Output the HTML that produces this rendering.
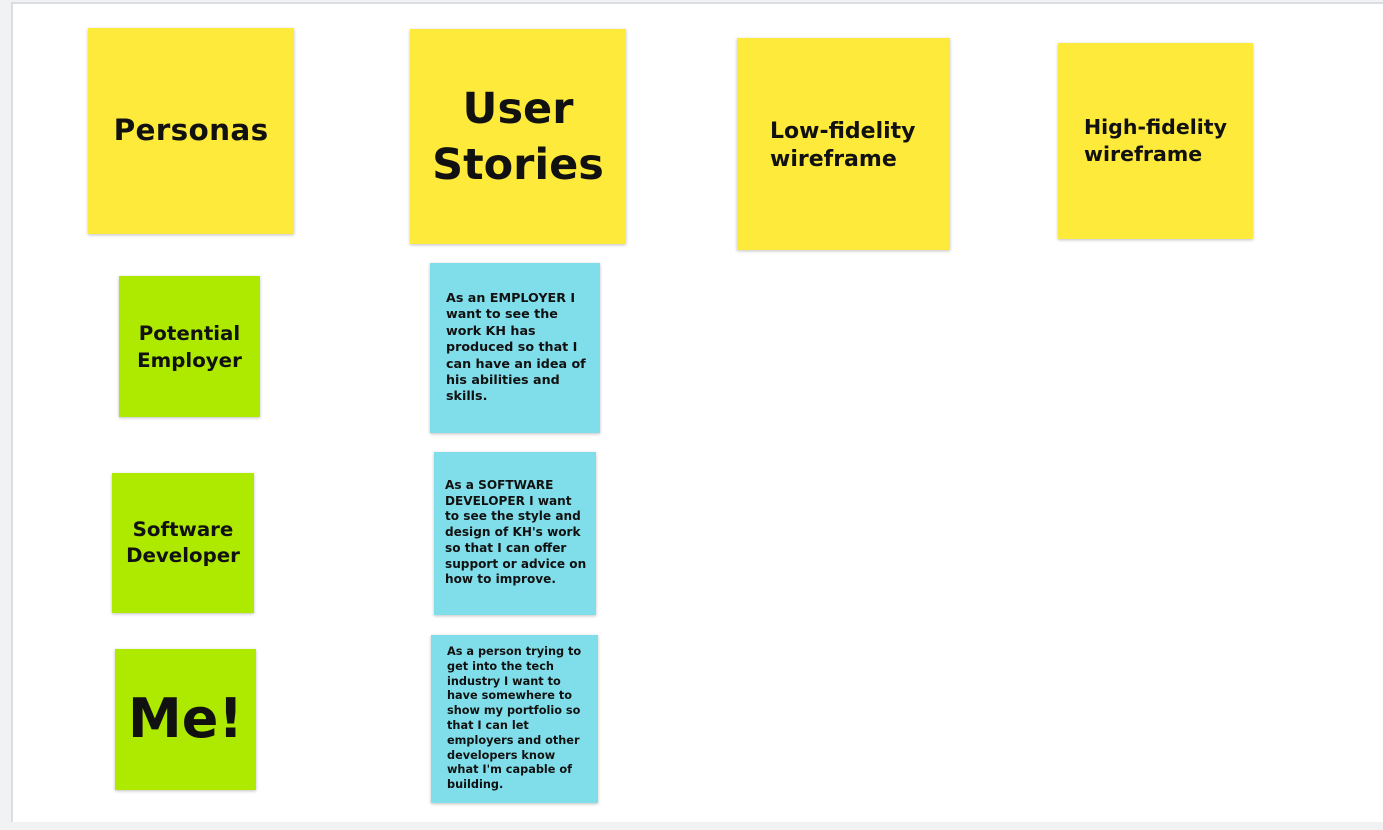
<!DOCTYPE html>
<html><head><meta charset="utf-8"><style>
html,body{margin:0;padding:0;}
body{width:1383px;height:830px;background:#f1f2f4;position:relative;overflow:hidden;font-family:"DejaVu Sans","Liberation Sans",sans-serif;font-weight:bold;color:#111;}
.canvas{position:absolute;left:11px;top:2px;width:1380px;height:818px;background:#fff;border-left:2px solid #dcdde0;border-top:2px solid #dcdde0;}
.n{position:absolute;box-shadow:0 1px 3px rgba(0,0,0,.25);white-space:nowrap;}
.y{background:#feea3b;}
.g{background:#aeea00;}
.c{background:#80deea;}
.t{position:absolute;}
</style></head><body>
<div class="canvas"></div>
<div class="n y" style="left:88px;top:28px;width:206px;height:206px;"><div class="t" style="left:0;right:0;top:85px;text-align:center;font-size:29.5px;letter-spacing:0.3px;">Personas</div></div>
<div class="n y" style="left:410px;top:29px;width:216px;height:215px;"><div class="t" style="left:0;right:0;top:52px;text-align:center;font-size:43px;line-height:56px;">User<br>Stories</div></div>
<div class="n y" style="left:737px;top:38px;width:213px;height:212px;"><div class="t" style="left:33px;top:80px;font-size:22px;line-height:28px;">Low-fidelity<br>wireframe</div></div>
<div class="n y" style="left:1058px;top:43px;width:195px;height:196px;"><div class="t" style="left:26px;top:71px;font-size:20.5px;line-height:27px;">High-fidelity<br>wireframe</div></div>
<div class="n g" style="left:119px;top:276px;width:141px;height:141px;"><div class="t" style="left:0;right:0;top:44px;text-align:center;font-size:19.8px;line-height:27px;">Potential<br>Employer</div></div>
<div class="n g" style="left:112px;top:473px;width:142px;height:140px;"><div class="t" style="left:0;right:0;top:44px;text-align:center;font-size:19.8px;line-height:26px;">Software<br>Developer</div></div>
<div class="n g" style="left:115px;top:649px;width:141px;height:141px;"><div class="t" style="left:0;right:0;top:35px;text-align:center;font-size:54px;line-height:70px;">Me!</div></div>
<div class="n c" style="left:430px;top:263px;width:170px;height:170px;"><div class="t" style="left:16px;top:27px;font-size:12.7px;line-height:16.4px;">As an EMPLOYER I<br>want to see the<br>work KH has<br>produced so that I<br>can have an idea of<br>his abilities and<br>skills.</div></div>
<div class="n c" style="left:434px;top:452px;width:162px;height:163px;"><div class="t" style="left:11px;top:26px;font-size:12.1px;line-height:15.7px;">As a SOFTWARE<br>DEVELOPER I want<br>to see the style and<br>design of KH's work<br>so that I can offer<br>support or advice on<br>how to improve.</div></div>
<div class="n c" style="left:431px;top:635px;width:167px;height:168px;"><div class="t" style="left:16px;top:10px;font-size:11.3px;line-height:14.8px;">As a person trying to<br>get into the tech<br>industry I want to<br>have somewhere to<br>show my portfolio so<br>that I can let<br>employers and other<br>developers know<br>what I'm capable of<br>building.</div></div>
</body></html>
